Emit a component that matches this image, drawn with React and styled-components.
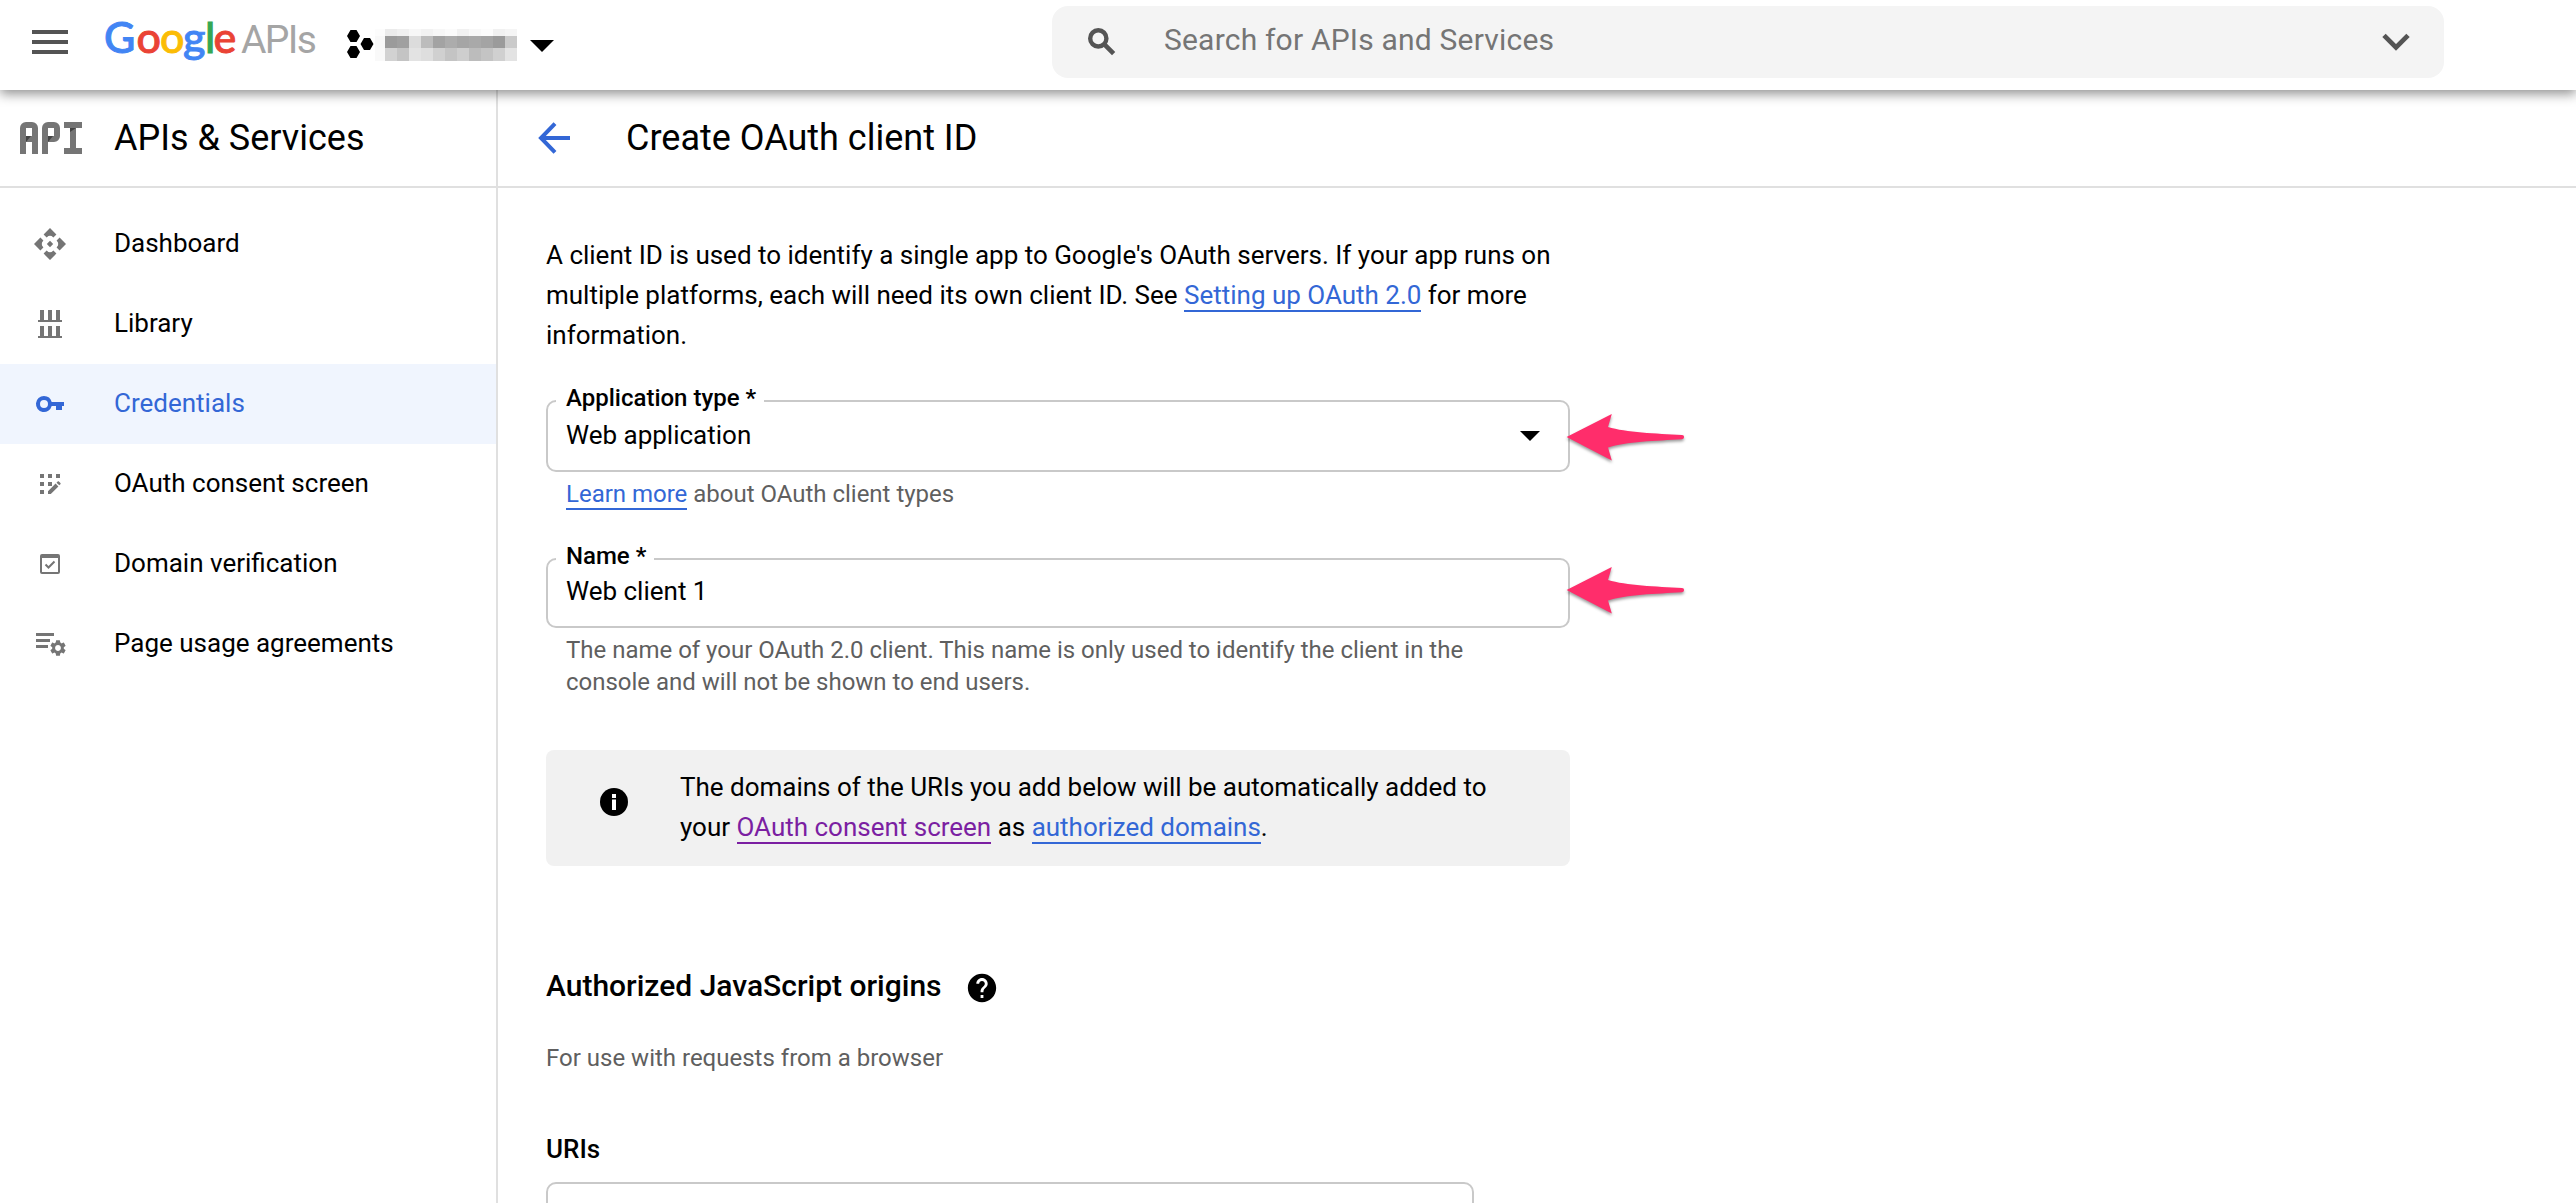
import React from "react";
import styled, { createGlobalStyle } from "styled-components";
import { MdHelp, MdSettings } from "react-icons/md";

const BLUE = "#3367d6";
const PURPLE = "#7b1fa2";
const ICON_GRAY = "#757575";

const GlobalStyle = createGlobalStyle`
  *, *::before, *::after { box-sizing: border-box; }
  html, body { margin: 0; background: #fff; }
  body {
    height: 1203px;
    overflow: hidden;
    font-family: Roboto, "Liberation Sans", sans-serif;
    font-size: 26px;
    color: #000;
  }
  svg { display: block; flex: none; }
`;

const Page = styled.div`
  width: 2576px;
  height: 1203px;
  display: flex;
  flex-direction: column;
  overflow: hidden;
`;

/* ---------- top bar ---------- */

const TopBar = styled.header`
  position: relative;
  z-index: 2;
  flex: none;
  height: 90px;
  display: flex;
  align-items: flex-start;
  padding-left: 32px;
  background: #fff;
  box-shadow: 0 4px 11px rgba(0, 0, 0, 0.43);
`;

const MenuButton = styled.div`
  width: 36px;
  margin-top: 30px;
  display: grid;
  gap: 6px;
`;

const MenuBar = styled.span`
  height: 4px;
  background: #545454;
`;

const Brand = styled.div`
  width: 243px;
  height: 72px;
  margin-left: 36px;
  margin-top: 1px;
  display: flex;
  align-items: baseline;
  white-space: nowrap;
`;

const Wordmark = styled.span`
  width: 137px;
  font-family: Lato, sans-serif;
  font-size: 43px;
  font-weight: 500;
  line-height: 72px;
  display: inline-flex;
`;

const Letter = styled.span`
  width: ${(p) => p.$w}px;
  color: ${(p) => p.$color};
  -webkit-text-stroke: 0.9px ${(p) => p.$color};
`;

const Suffix = styled.span`
  font-size: 39px;
  font-weight: 400;
  letter-spacing: -1.6px;
  color: #a5a5a5;
`;

const ProjectPicker = styled.div`
  display: flex;
  align-items: flex-start;
  margin-top: 29px;
`;

const ProjectIcon = styled.svg`
  margin-top: 1px;
`;

const Mosaic = styled.div`
  display: grid;
  grid-template-columns: 10px repeat(11, 12px);
  grid-template-rows: 7px 12px 13px;
  margin-left: 1px;
`;

const Pixel = styled.span`
  background: ${(p) => p.$tone};
`;

const ProjectCaret = styled.svg`
  margin: 11px 0 0 13px;
`;

const SearchBox = styled.div`
  width: 1392px;
  height: 72px;
  margin: 6px 0 0 498px;
  padding: 0 34px 0 36px;
  display: flex;
  align-items: center;
  background: #f4f4f4;
  border-radius: 16px;
`;

const SearchText = styled.span`
  flex: 1;
  margin: -5px 0 0 47px;
  font-size: 30px;
  letter-spacing: 0.2px;
  color: #757575;
`;

/* ---------- layout ---------- */

const Body = styled.div`
  flex: 1;
  display: flex;
  min-height: 0;
`;

const Sidebar = styled.aside`
  flex: none;
  width: 498px;
  border-right: 2px solid #e0e0e0;
`;

const PanelHeader = styled.div`
  height: 98px;
  display: flex;
  align-items: center;
  border-bottom: 2px solid #e0e0e0;
  padding-left: ${(p) => p.$left}px;
`;

const PanelTitle = styled.h1`
  margin: 0 0 0 ${(p) => p.$gap}px;
  font-size: 36px;
  font-weight: 400;
  line-height: 48px;
`;

/* ---------- API emblem, built from blocks ---------- */

const Emblem = styled.div`
  display: flex;
  gap: 4px;
  color: ${ICON_GRAY};
`;

const Block = styled.div`
  width: 18px;
  height: 32px;
  display: flex;
  flex-direction: column;
`;

const ArchTop = styled.span`
  height: 20px;
  border: 6px solid currentColor;
  border-radius: ${(p) => p.$radius};
`;

const Legs = styled.span`
  height: 12px;
  border-left: 6px solid currentColor;
  border-right: ${(p) => (p.$both ? "6px solid currentColor" : "0")};
`;

const Fold = styled.span`
  display: block;
  width: ${(p) => p.$w}px;
  height: ${(p) => p.$h}px;
  margin-top: ${(p) => p.$top}px;
  background: #424242;
  clip-path: polygon(0 0, 100% 0, 0 100%);
`;

const Slab = styled.span`
  height: 6px;
  background: currentColor;
`;

const Stem = styled.span`
  width: 6px;
  height: 20px;
  margin-left: 6px;
  background: currentColor;
`;

/* ---------- navigation ---------- */

const NavList = styled.nav`
  padding-top: 16px;
`;

const NavItem = styled.a`
  height: 80px;
  display: flex;
  align-items: center;
  padding-left: 34px;
  background: ${(p) => (p.$active ? "#f0f5fe" : "transparent")};
  color: ${(p) => (p.$active ? BLUE : "#000")};
`;

const NavIcon = styled.svg`
  color: ${(p) => (p.$active ? BLUE : ICON_GRAY)};
`;

const NavLabel = styled.span`
  margin: -2px 0 0 48px;
`;

/* ---------- form ---------- */

const Main = styled.main`
  flex: 1;
  min-width: 0;
`;

const Form = styled.div`
  width: 1024px;
  margin: 47px 0 0 48px;
`;

const Paragraph = styled.p`
  margin: 0;
  line-height: 40px;
  letter-spacing: -0.01px;
`;

const Link = styled.a`
  color: ${(p) => (p.$visited ? PURPLE : BLUE)};
  border-bottom: 2px solid ${(p) => (p.$visited ? PURPLE : BLUE)};
`;

const Field = styled.div`
  position: relative;
  height: ${(p) => p.$height}px;
  margin-top: ${(p) => p.$top}px;
  padding: ${(p) => p.$pad}px 28px 0 18px;
  display: flex;
  justify-content: space-between;
  align-items: flex-start;
  border: 2px solid #c9c9c9;
  border-radius: 10px;
`;

const FieldLabel = styled.label`
  position: absolute;
  left: 8px;
  top: -19px;
  height: 30px;
  padding: 0 8px 0 10px;
  background: #fff;
  font-size: 24px;
  font-weight: 500;
  line-height: 30px;
`;

const FieldValue = styled.span`
  line-height: 32px;
`;

const SelectCaret = styled.svg`
  margin-top: 12px;
`;

const Pointer = styled.svg`
  position: absolute;
  left: 1018px;
  top: ${(p) => p.$top}px;
  overflow: visible;
  filter: drop-shadow(0 2px 1.5px rgba(0, 0, 0, 0.4));
`;

const Hint = styled.p`
  margin: ${(p) => p.$top}px 20px 0;
  font-size: 24px;
  line-height: 32px;
  letter-spacing: -0.01px;
  color: #5f5f5f;
`;

const InfoBox = styled.div`
  height: 116px;
  margin-top: 52px;
  padding: 17px 54px 0;
  display: flex;
  align-items: flex-start;
  background: #f1f1f1;
  border-radius: 8px;
`;

const InfoIcon = styled.svg`
  margin: 21px 52px 0 0;
`;

const SectionHeading = styled.h2`
  margin: 97px 0 0;
  height: 44px;
  display: flex;
  align-items: center;
  font-size: 30px;
  font-weight: 500;
`;

const HelpIcon = styled(MdHelp)`
  margin: 6px 0 0 23px;
`;

const SectionNote = styled.p`
  margin: 35px 0 0;
  font-size: 24px;
  line-height: 32px;
  color: #5f5f5f;
`;

const GroupLabel = styled.h3`
  margin: 57px 0 0;
  font-size: 26px;
  font-weight: 500;
  line-height: 36px;
`;

const UriBox = styled.div`
  width: 928px;
  height: 80px;
  margin-top: 15px;
  border: 2px solid #c9c9c9;
  border-radius: 10px;
`;

const wordmark = [
  ["G", "#4285f4", 32.5],
  ["o", "#ea4335", 23.5],
  ["o", "#fbbc05", 23],
  ["g", "#4285f4", 22],
  ["l", "#34a853", 8.5],
  ["e", "#ea4335", 24],
];

const mosaic = [
  "#fcfcfc", "#ebebeb", "#f0f0f0", "#f7f7f7", "#f2f2f2", "#f7f7f7", "#fbfbfb", "#f1f1f1", "#f8f8f8", "#fcfcfc", "#f1f1f1", "#f5f5f5",
  "#f8f8f8", "#9b9b9b", "#a0a0a0", "#dcdcdc", "#bcbcbc", "#a3a3a3", "#acacac", "#a5a5a5", "#a9a9a9", "#a4a4a4", "#9b9b9b", "#cacaca",
  "#f9f9f9", "#d2d2d2", "#c4c4c4", "#e3e3e3", "#dedede", "#d0d0d0", "#c4c4c4", "#cecece", "#bcbcbc", "#c4c4c4", "#d0d0d0", "#e3e3e3",
];

const diamondPiece = "M16 0L22.4 6.4L19.4 9.4L17.6 8A8.2 8.2 0 0 0 14.4 8L12.6 9.4L9.6 6.4Z";

const navItems = [
  {
    label: "Dashboard",
    icon: (
      <>
        {[0, 90, 180, 270].map((a) => (
          <path key={a} d={diamondPiece} transform={`rotate(${a} 16 16)`} />
        ))}
        <path d="M16 12.8L19.2 16L16 19.2L12.8 16Z" />
      </>
    ),
  },
  {
    label: "Library",
    icon: (
      <path d="M6 2h4v10h4V2h4v10h4V2h4v10h2v2H4v-2h2zM6 18h4v10h4V18h4v10h4V18h4v10h2v2H4v-2h2z" />
    ),
  },
  {
    label: "Credentials",
    active: true,
    icon: (
      <path
        fillRule="evenodd"
        d="M10 8a8 8 0 0 1 7.7 6H30v4h-2v4h-6v-4h-4.3A8 8 0 1 1 10 8zM10 12a4 4 0 1 0 0 8a4 4 0 1 0 0-8z"
      />
    ),
  },
  {
    label: "OAuth consent screen",
    icon: (
      <path d="M6 6h4v4H6zM14 6h4v4h-4zM22 6h4v4h-4zM6 14h4v4H6zM14 14h4v4h-4zM6 22h4v4H6zM14 23.2l7.6-7.6l2.8 2.8l-7.6 7.6H14zM22.5 14.7l1.2-1.2c.4-.4.8-.4 1.2 0l1.5 1.5c.4.4.4.8 0 1.2l-1.1 1.1z" />
    ),
  },
  {
    label: "Domain verification",
    icon: (
      <>
        <path
          fillRule="evenodd"
          d="M8 6h16a2 2 0 0 1 2 2v16a2 2 0 0 1-2 2H8a2 2 0 0 1-2-2V8a2 2 0 0 1 2-2zM8 10v14h16V10z"
        />
        <path d="M11.5 16.5L14.5 19.5L20.5 13.5" fill="none" stroke="currentColor" strokeWidth="2" />
      </>
    ),
  },
  {
    label: "Page usage agreements",
    icon: (
      <>
        <path d="M2 5h18v3H2zM2 11h14v3H2zM2 17h12v3H2z" />
        <MdSettings x="14.3" y="10.3" size="19.4" />
      </>
    ),
  },
];

function ApiEmblem() {
  return (
    <Emblem>
      <Block>
        <ArchTop $radius="6px 6px 0 0">
          <Fold $w={5} $h={6} $top={8} />
        </ArchTop>
        <Legs $both />
      </Block>
      <Block>
        <ArchTop $radius="6px 6px 6px 0">
          <Fold $w={5} $h={6} $top={8} />
        </ArchTop>
        <Legs />
      </Block>
      <Block>
        <Slab />
        <Stem>
          <Fold $w={6} $h={4} $top={0} />
        </Stem>
        <Slab />
      </Block>
    </Emblem>
  );
}

function PointerArrow({ top }) {
  return (
    <Pointer $top={top} width="120" height="52" viewBox="0 0 120 52">
      <path
        d="M0.6 25L45.8 2L42 15C60 20.5 90 21.5 116 23A2 2 0 0 1 116 27.2C90 28.8 60 29.5 42 35.5L45.8 48.6Z"
        fill="#ff2d6b"
      />
    </Pointer>
  );
}

export default function App() {
  return (
    <Page>
      <GlobalStyle />
      <TopBar>
        <MenuButton>
          <MenuBar />
          <MenuBar />
          <MenuBar />
        </MenuButton>
        <Brand>
          <Wordmark>
            {wordmark.map(([ch, color, w], i) => (
              <Letter key={i} $color={color} $w={w}>
                {ch}
              </Letter>
            ))}
          </Wordmark>
          <Suffix>APIs</Suffix>
        </Brand>
        <ProjectPicker>
          <ProjectIcon width="27" height="28" viewBox="0 0 27 28">
            <path d="M3.5 0h6L13 6l-3.5 6h-6L0 6zM3.5 16h6l3.5 6l-3.5 6h-6L0 22zM17 8h6l3.5 6l-3.5 6h-6l-3.5-6z" />
          </ProjectIcon>
          <Mosaic>
            {mosaic.map((tone, i) => (
              <Pixel key={i} $tone={tone} />
            ))}
          </Mosaic>
          <ProjectCaret width="24" height="12" viewBox="0 0 24 12">
            <path d="M0 0h24L12 12z" />
          </ProjectCaret>
        </ProjectPicker>
        <SearchBox>
          <svg width="29" height="28" viewBox="0 0 29 28" fill="none" stroke="#545454">
            <circle cx="10.3" cy="10.4" r="8.1" strokeWidth="4.4" />
            <path d="M15.6 15.7L25.6 25.7" strokeWidth="4.6" />
          </svg>
          <SearchText>Search for APIs and Services</SearchText>
          <svg width="28" height="18" viewBox="0 0 28 18" fill="none" stroke="#545454" strokeWidth="4.8">
            <path d="M2 2.4L14 14.4L26 2.4" />
          </svg>
        </SearchBox>
      </TopBar>

      <Body>
        <Sidebar>
          <PanelHeader $left={20}>
            <ApiEmblem />
            <PanelTitle $gap={32}>APIs &amp; Services</PanelTitle>
          </PanelHeader>
          <NavList>
            {navItems.map((item) => (
              <NavItem key={item.label} $active={item.active}>
                <NavIcon $active={item.active} width="32" height="32" viewBox="0 0 32 32" fill="currentColor">
                  {item.icon}
                </NavIcon>
                <NavLabel>{item.label}</NavLabel>
              </NavItem>
            ))}
          </NavList>
        </Sidebar>

        <Main>
          <PanelHeader $left={40}>
            <svg width="32" height="32" viewBox="0 0 32 32" fill="none" stroke={BLUE} strokeWidth="4">
              <path d="M17 1.6L3 16L17 30.4M3 16H32" />
            </svg>
            <PanelTitle $gap={56}>Create OAuth client ID</PanelTitle>
          </PanelHeader>
          <Form>
            <Paragraph>
              A client ID is used to identify a single app to Google's OAuth servers. If your app runs on multiple
              platforms, each will need its own client ID. See <Link>Setting up OAuth 2.0</Link> for more information.
            </Paragraph>

            <Field $height={72} $top={45} $pad={17}>
              <FieldLabel>Application type *</FieldLabel>
              <FieldValue>Web application</FieldValue>
              <SelectCaret width="20" height="10" viewBox="0 0 20 10">
                <path d="M0 0h20L10 10z" />
              </SelectCaret>
              <PointerArrow top={10} />
            </Field>
            <Hint $top={6}>
              <Link>Learn more</Link> about OAuth client types
            </Hint>

            <Field $height={70} $top={48} $pad={15}>
              <FieldLabel>Name *</FieldLabel>
              <FieldValue>Web client 1</FieldValue>
              <PointerArrow top={5} />
            </Field>
            <Hint $top={6}>
              The name of your OAuth 2.0 client. This name is only used to identify the client in the console and will
              not be shown to end users.
            </Hint>

            <InfoBox>
              <InfoIcon width="28" height="28" viewBox="0 0 28 28">
                <circle cx="14" cy="14" r="14" />
                <path d="M12 6h4v4h-4zM12 11.6h4V22h-4z" fill="#fff" />
              </InfoIcon>
              <Paragraph>
                The domains of the URIs you add below will be automatically added to your{" "}
                <Link $visited>OAuth consent screen</Link> as <Link>authorized domains</Link>.
              </Paragraph>
            </InfoBox>

            <SectionHeading>
              Authorized JavaScript origins
              <HelpIcon size={34} />
            </SectionHeading>
            <SectionNote>For use with requests from a browser</SectionNote>
            <GroupLabel>URIs</GroupLabel>
            <UriBox />
          </Form>
        </Main>
      </Body>
    </Page>
  );
}
